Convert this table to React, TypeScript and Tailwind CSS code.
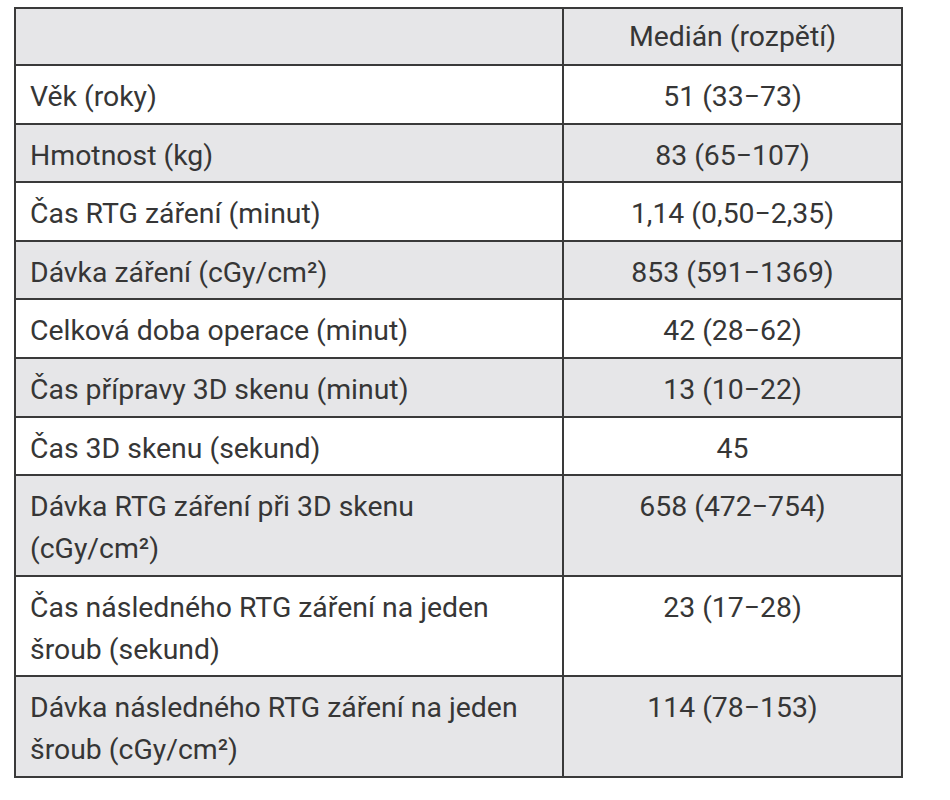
import React from "react";

const rows: { label: React.ReactNode; value: string }[] = [
  { label: "Věk (roky)", value: "51 (33−73)" },
  { label: "Hmotnost (kg)", value: "83 (65−107)" },
  { label: "Čas RTG záření (minut)", value: "1,14 (0,50−2,35)" },
  { label: "Dávka záření (cGy/cm²)", value: "853 (591−1369)" },
  { label: "Celková doba operace (minut)", value: "42 (28−62)" },
  { label: "Čas přípravy 3D skenu (minut)", value: "13 (10−22)" },
  { label: "Čas 3D skenu (sekund)", value: "45" },
  {
    label: (
      <>
        Dávka RTG záření při 3D skenu
        <br />
        (cGy/cm²)
      </>
    ),
    value: "658 (472−754)",
  },
  {
    label: (
      <>
        Čas následného RTG záření na jeden
        <br />
        šroub (sekund)
      </>
    ),
    value: "23 (17−28)",
  },
  {
    label: (
      <>
        Dávka následného RTG záření na jeden
        <br />
        šroub (cGy/cm²)
      </>
    ),
    value: "114 (78−153)",
  },
];

const App = () => {
  return (
    <div className="min-h-screen bg-white pt-[7px] pl-[14px] font-['Roboto',sans-serif] text-[28.4px] leading-[42px] text-[#363636]">
      <table className="w-[889px] border-collapse border-2 border-[#3a3a3a]">
        <thead>
          <tr className="bg-[#e6e6e8]">
            <th className="w-[548px] border-2 border-[#3a3a3a] h-[57px]"></th>
            <th className="border-2 border-[#3a3a3a] pt-[6px] pb-[5px] text-center font-normal">
              Medián (rozpětí)
            </th>
          </tr>
        </thead>
        <tbody>
          {rows.map((row, i) => (
            <tr key={i} className={i % 2 === 1 ? "bg-[#e6e6e8]" : "bg-white"}>
              <td className="border-2 border-[#3a3a3a] px-[14px] pt-[10px] pb-[4.6px] align-top">
                {row.label}
              </td>
              <td className="border-2 border-[#3a3a3a] pt-[10px] pb-[4.6px] text-center align-top">
                {row.value}
              </td>
            </tr>
          ))}
        </tbody>
      </table>
    </div>
  );
};

export default App;
